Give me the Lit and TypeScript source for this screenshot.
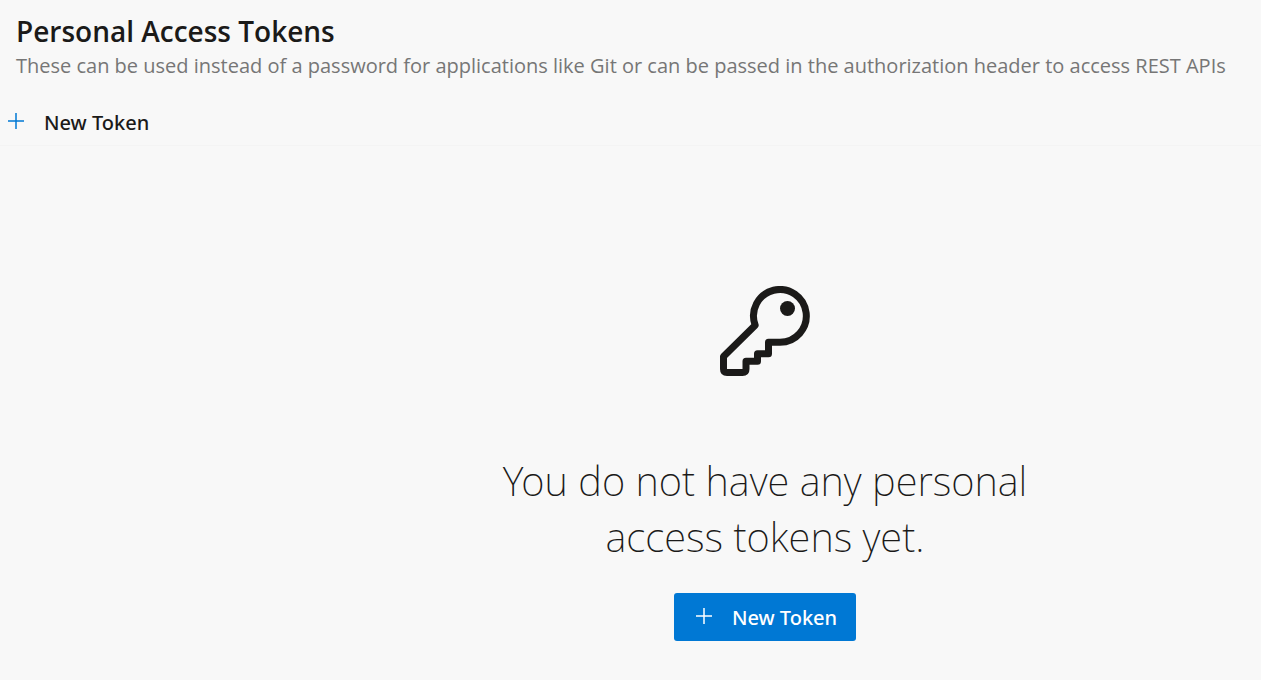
import { LitElement, html, css } from "lit";
import { customElement } from "lit/decorators.js";

const plusIcon = html`<svg class="plus" viewBox="0 0 18 18" aria-hidden="true">
  <path d="M9 1v16M1 9h16" />
</svg>`;

@customElement("app-root")
export class AppRoot extends LitElement {
  static styles = css`
    :host {
      display: block;
      min-height: 100vh;
      background: #f8f8f8;
      color: #1b1a19;
      font-family: "Segoe UI", "Noto Sans", sans-serif;
      box-sizing: border-box;
    }
    .header {
      padding: 11px 16px 0;
      font-family: "Segoe UI", "Open Sans", sans-serif;
    }
    h1 {
      margin: 0;
      font-size: 28px;
      line-height: 40px;
      font-weight: 600;
    }
    .subtitle {
      margin: 0;
      font-size: 20px;
      line-height: 30px;
      color: #767676;
    }
    button {
      display: inline-flex;
      align-items: flex-start;
      gap: 19px;
      border: 0;
      background: none;
      font: inherit;
      font-size: 20px;
      line-height: 28px;
      font-weight: 500;
      cursor: pointer;
      color: inherit;
    }
    .plus {
      width: 18px;
      height: 18px;
      margin-top: 3px;
      fill: none;
      stroke: currentColor;
      stroke-width: 1.5;
    }
    .toolbar {
      padding: 28px 7px 8px;
      border-bottom: 1px solid #f4f4f4;
    }
    .toolbar button {
      padding: 0;
    }
    .toolbar .plus {
      color: #0078d4;
    }
    .empty {
      display: flex;
      flex-direction: column;
      align-items: center;
      margin: 140px 0 0 269px;
    }
    .key {
      width: 90px;
      height: 90px;
    }
    .message {
      margin: 77px 0 0;
      max-width: 560px;
      font-size: 40px;
      line-height: 56px;
      font-weight: 200;
      text-align: center;
    }
    .primary {
      margin-top: 28px;
      padding: 11px 19px 9px 21px;
      background: #0078d4;
      color: #fff;
      border-radius: 3px;
    }
  `;

  render() {
    return html`
      <header class="header">
        <h1>Personal Access Tokens</h1>
        <p class="subtitle">These can be used instead of a password for applications like Git or can be passed in the authorization header to access REST APIs</p>
      </header>
      <div class="toolbar">
        <button type="button">${plusIcon}New Token</button>
      </div>
      <main class="empty">
        <svg class="key" viewBox="0 0 90 90" aria-hidden="true">
          <path
            d="M3.5 70.5L35.2 39.2A26.4 26.4 0 1 1 60 56.3H48.5V67.7H37.5V75.2H26V83Q26 86.5 22.5 86.5H7Q3.5 86.5 3.5 83Z"
            fill="none" stroke="#1b1a19" stroke-width="7" stroke-linejoin="round" />
          <circle cx="67.5" cy="22.5" r="7.5" fill="#1b1a19" />
        </svg>
        <p class="message">You do not have any personal access tokens yet.</p>
        <button class="primary" type="button">${plusIcon}New Token</button>
      </main>
    `;
  }
}
